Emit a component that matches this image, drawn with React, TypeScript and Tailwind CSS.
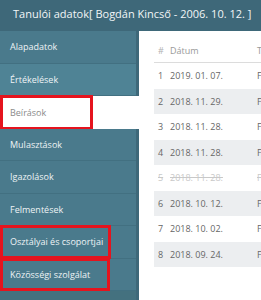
import React from "react";

const items = [
  { label: "Alapadatok", h: "h-[33px]" },
  { label: "Értékelések", h: "h-[32px]", hover: true },
  { label: "Beírások", h: "h-[33px]", active: true, box: "w-[93px]" },
  { label: "Mulasztások", h: "h-[32px]" },
  { label: "Igazolások", h: "h-[33px]" },
  { label: "Felmentések", h: "h-[32px]" },
  { label: "Osztályai és csoportjai", h: "h-[33px]", box: "w-[111px]" },
  { label: "Közösségi szolgálat", h: "h-[32px]", box: "w-[110px]" },
];

const rows = [
  { n: 1, d: "2019. 01. 07." },
  { n: 2, d: "2018. 11. 29." },
  { n: 3, d: "2018. 11. 28." },
  { n: 4, d: "2018. 11. 28." },
  { n: 5, d: "2018. 11. 28.", struck: true },
  { n: 6, d: "2018. 10. 12." },
  { n: 7, d: "2018. 10. 02." },
  { n: 8, d: "2018. 09. 24." },
];

export default function App() {
  return (
    <div
      className="w-[261px] h-[300px] overflow-hidden bg-[#3e6879] flex flex-col"
      style={{ fontFamily: '"Open Sans", "Liberation Sans", sans-serif' }}
    >
      <div className="h-[31px] shrink-0 flex items-center pl-[13px] pb-[2px] text-[11px] text-[#f2f6f7] whitespace-nowrap">
        Tanulói adatok[ Bogdán Kincső - 2006. 10. 12. ]
      </div>
      <div className="flex flex-1 min-h-0">
        <div className="w-[139px] shrink-0 flex flex-col">
          {items.map((it) => (
            <div
              key={it.label}
              className={`relative ${it.h} shrink-0 flex items-center pl-[10px] text-[9px] whitespace-nowrap ${
                it.active
                  ? "w-[139px] bg-white text-[#8a8a8a]"
                  : it.hover
                  ? "w-[136px] bg-[#4f8395] text-[#eef3f5] border-b border-[#427081]"
                  : "w-[136px] bg-[#4a7a8c] text-[#eef3f5] border-b border-[#427081]"
              }`}
            >
              {it.label}
              {it.box && (
                <div
                  className={`absolute left-0 top-[-1px] bottom-[-1px] ${it.box} border-[3px] border-[#e5141e]`}
                />
              )}
            </div>
          ))}
          <div className="w-[136px] flex-1 bg-[#44717f]" />
        </div>
        <div className="flex-1 bg-white overflow-hidden pl-[15px]">
          <div className="w-[200px] text-[9px] whitespace-nowrap">
            <div className="h-[32px] flex items-end pb-[5px] border-b border-[#dcdcdc] text-[#999]">
              <div className="w-[14px] pl-[4px] text-[#b0b0b0]">#</div>
              <div className="w-[89px] pl-[2px]">Dátum</div>
              <div>Típus</div>
            </div>
            {rows.map((r) => (
              <div
                key={r.n}
                className={`h-[25.5px] flex items-center ${
                  r.n % 2 === 0 ? "bg-[#eceef0]" : "bg-white"
                } ${r.struck ? "text-[#c8c8c8] line-through" : "text-[#666]"}`}
              >
                <div className="w-[14px] pl-[4px]">{r.n}</div>
                <div className="w-[89px] pl-[2px]">{r.d}</div>
                <div>Figyelmeztetés</div>
              </div>
            ))}
          </div>
        </div>
      </div>
    </div>
  );
}
